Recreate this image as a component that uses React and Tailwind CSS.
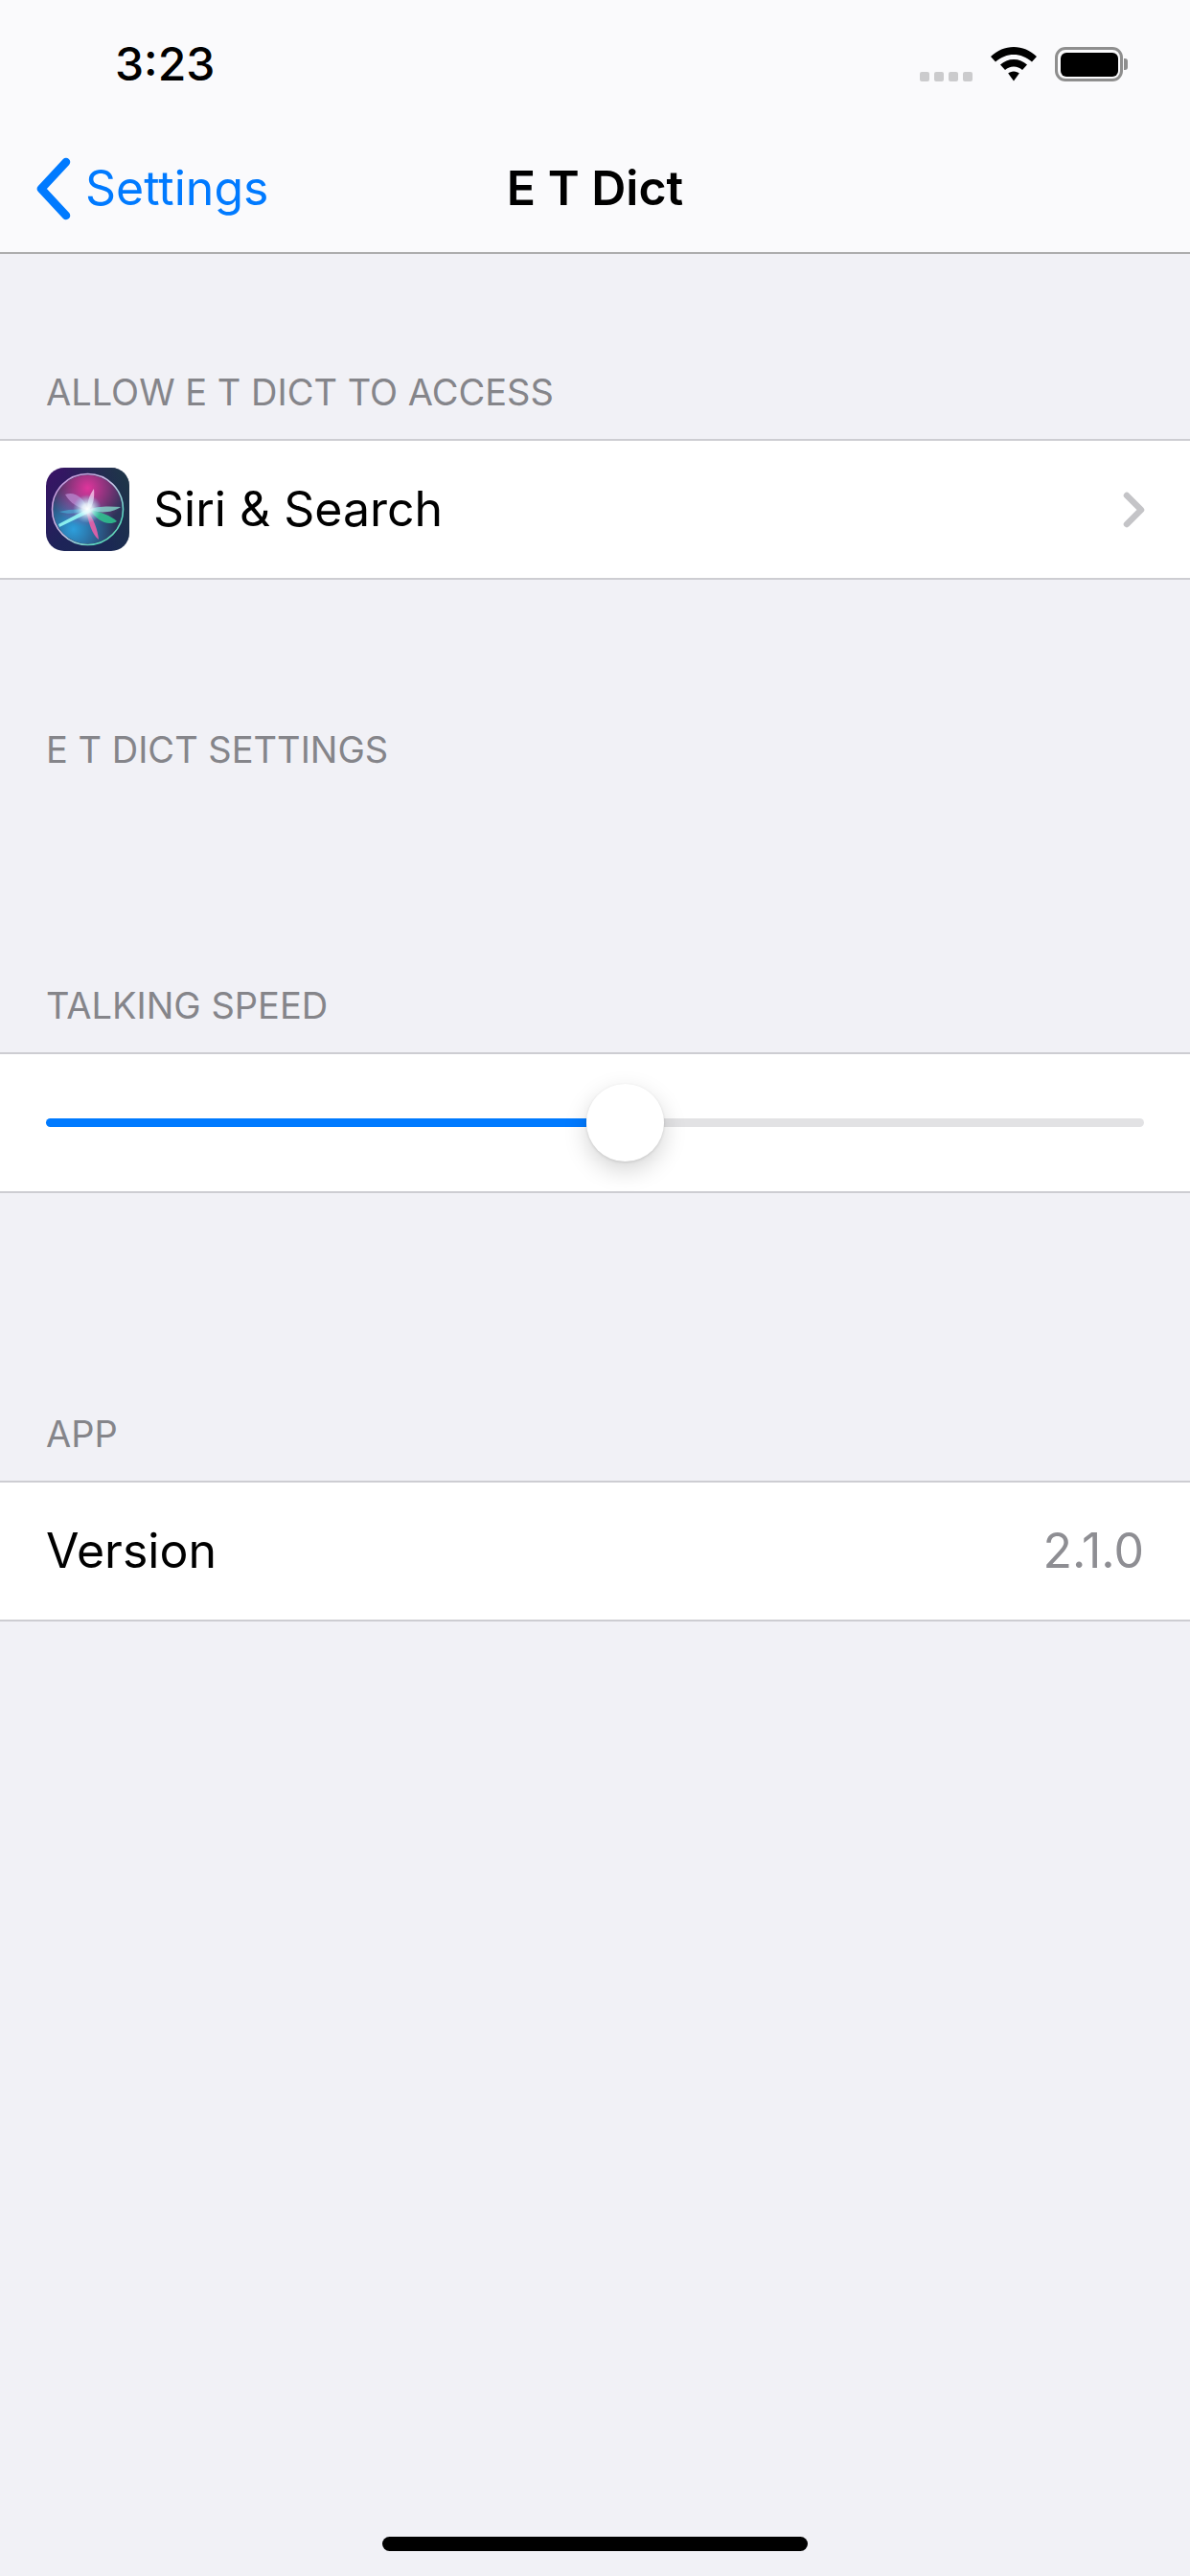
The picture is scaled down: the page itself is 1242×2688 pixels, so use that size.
const SiriIcon = () => (
  <svg width="87" height="87" viewBox="0 0 87 87" className="shrink-0">
    <defs>
      <linearGradient id="siriBg" x1="0" y1="0" x2="1" y2="1">
        <stop offset="0" stopColor="#3b1266" />
        <stop offset="0.55" stopColor="#1d2458" />
        <stop offset="1" stopColor="#1a2a52" />
      </linearGradient>
      <linearGradient id="siriBg2" x1="1" y1="0" x2="0" y2="0.6">
        <stop offset="0" stopColor="#1f3a44" stopOpacity="0.9" />
        <stop offset="0.6" stopColor="#1f3a44" stopOpacity="0" />
      </linearGradient>
      <linearGradient id="siriRing" x1="0" y1="0" x2="1" y2="1">
        <stop offset="0" stopColor="#c58ad8" />
        <stop offset="0.5" stopColor="#c9c3e6" />
        <stop offset="0.8" stopColor="#58d6c0" />
        <stop offset="1" stopColor="#7fd9a8" />
      </linearGradient>
      <radialGradient id="siriPink" cx="0.5" cy="0.2" r="0.55">
        <stop offset="0" stopColor="#e0359c" />
        <stop offset="1" stopColor="#e0359c" stopOpacity="0" />
      </radialGradient>
      <radialGradient id="siriBlue" cx="0.3" cy="0.78" r="0.6">
        <stop offset="0" stopColor="#2d9fdc" />
        <stop offset="1" stopColor="#2d9fdc" stopOpacity="0" />
      </radialGradient>
      <radialGradient id="siriCore" cx="0.5" cy="0.5" r="0.5">
        <stop offset="0" stopColor="#ffffff" />
        <stop offset="0.35" stopColor="#e8fbff" stopOpacity="0.85" />
        <stop offset="1" stopColor="#7fe9ff" stopOpacity="0" />
      </radialGradient>
      <clipPath id="siriClip">
        <circle cx="43.5" cy="43.5" r="36" />
      </clipPath>
      <filter id="siriSoft">
        <feGaussianBlur stdDeviation="0.7" />
      </filter>
    </defs>
    <rect width="87" height="87" rx="19" fill="url(#siriBg)" />
    <rect width="87" height="87" rx="19" fill="url(#siriBg2)" />
    <circle cx="43.5" cy="43.5" r="37" fill="#2a3358" />
    <g clipPath="url(#siriClip)">
      <circle cx="43.5" cy="43.5" r="37" fill="url(#siriBlue)" />
      <circle cx="43.5" cy="43.5" r="37" fill="url(#siriPink)" />
      <g filter="url(#siriSoft)">
        <path d="M20 28 C30 24 40 32 44 44 C34 42 26 38 20 28Z" fill="#b98ad0" opacity="0.75" />
        <path d="M50 22 C51 32 49 40 44 45 C42 38 45 29 50 22Z" fill="#f2c0e6" opacity="0.85" />
        <path d="M44 44 C52 40 66 40 78 41 C70 47 56 48 44 44Z" fill="#8cf0d8" opacity="0.7" />
        <path d="M46 44 C56 46 68 50 74 56 C64 62 52 54 46 44Z" fill="#2fc58f" opacity="0.85" />
        <path d="M42 44 C50 52 54 66 55 75 C48 70 44 56 42 44Z" fill="#e85fa8" opacity="0.9" />
        <path d="M45 42 L47 46 L14 62 L13 59Z" fill="#8ff3f0" opacity="0.95" />
        <path d="M14 46 C24 43 36 43 44 44 C34 48 22 49 14 46Z" fill="#3fc6e8" opacity="0.5" />
      </g>
      <circle cx="43" cy="43" r="15" fill="url(#siriCore)" />
    </g>
    <circle cx="43.5" cy="43.5" r="37" fill="none" stroke="url(#siriRing)" strokeWidth="1.6" />
  </svg>
);

const SectionHeader = ({ label, height }) => (
  <div className={`flex items-end px-12 pb-[26px] text-[38px] leading-[46px] text-[#85858a] ${height}`}>
    {label}
  </div>
);

const Row = ({ children }) => (
  <div className="flex h-[147px] items-center border-y-[2px] border-[#cdcdd2] bg-white px-12 text-[50px] text-black">
    {children}
  </div>
);

export default function App() {
  return (
    <div className="relative min-h-[2688px] bg-[#f1f1f6] font-['Inter','Liberation_Sans',sans-serif]">
      {/* nav bar */}
      <div className="h-[265px] border-b-[2px] border-[#adadad] bg-[#fafafc]">
        <div className="flex h-[132px] items-start justify-between pt-[38px] pl-[120px] pr-[65px]">
          <span className="text-[48px] font-medium leading-[58px] text-black">3:23</span>
          <div className="flex items-start gap-[19px] pt-[11px]">
            <div className="flex gap-[5px] pt-[26px]">
              <span className="h-[10px] w-[10px] rounded-[2px] bg-[#cbcbcd]" />
              <span className="h-[10px] w-[10px] rounded-[2px] bg-[#cbcbcd]" />
              <span className="h-[10px] w-[10px] rounded-[2px] bg-[#cbcbcd]" />
              <span className="h-[10px] w-[10px] rounded-[2px] bg-[#cbcbcd]" />
            </div>
            <svg width="48" height="36" viewBox="0 0 48 36">
              <path d="M24 0 C33 0 41 3.500 48 10 L43 15.500 C37 10.500 31 8 24 8 C17 8 11 10.500 5 15.500 L0 10 C7 3.500 15 0 24 0Z" fill="#000" />
              <path d="M24 13 C29.500 13 34 15 38 18.500 L33 24 C30.500 22 27.500 20.500 24 20.500 C20.500 20.500 17.500 22 15 24 L10 18.500 C14 15 18.500 13 24 13Z" fill="#000" />
              <path d="M24 25.500 C26.500 25.500 28.500 26.500 29.800 27.600 L24 35.500 L18.200 27.600 C19.500 26.500 21.500 25.500 24 25.500Z" fill="#000" />
            </svg>
            <div className="flex items-center gap-[1px]">
              <div className="flex h-[36px] w-[71px] items-center justify-center rounded-[11px] border-[3px] border-[#8e8e8e]">
                <div className="h-[25px] w-[60px] rounded-[6px] bg-black" />
              </div>
              <div className="h-[12px] w-[4px] rounded-r-[3px] bg-[#8e8e8e]" />
            </div>
          </div>
        </div>
        <div className="relative flex h-[131px] items-center pb-[2px]">
          <div className="flex items-center pl-[37px] text-[50px] text-[#007aff]">
            <svg width="39" height="66" viewBox="0 0 39 66" className="mr-[13px]">
              <path d="M32 5 L6 33 L32 61" fill="none" stroke="#007aff" strokeWidth="8.500" strokeLinecap="round" strokeLinejoin="round" />
            </svg>
            <span>Settings</span>
          </div>
          <div className="absolute inset-x-0 text-center text-[50px] font-semibold text-black">E T Dict</div>
        </div>
      </div>

      <SectionHeader label="ALLOW E T DICT TO ACCESS" height="h-[193px]" />
      <Row>
        <SiriIcon />
        <span className="ml-[25px] flex-1">Siri &amp; Search</span>
        <svg width="24" height="38" viewBox="0 0 24 38" className="mr-[-2px]">
          <path d="M4 4 L19 19 L4 34" fill="none" stroke="#c4c4c7" strokeWidth="6.500" strokeLinecap="round" strokeLinejoin="round" />
        </svg>
      </Row>

      <SectionHeader label="E T DICT SETTINGS" height="h-[226px]" />
      <SectionHeader label="TALKING SPEED" height="h-[267px]" />
      <Row>
        <div className="flex w-full items-center">
          <div className="h-[9px] w-[564px] rounded-l-full bg-[#007aff]" />
          <div className="z-10 h-[81px] w-[81px] shrink-0 rounded-full bg-white shadow-[0_9px_24px_rgba(0,0,0,0.17),0_1px_3px_rgba(0,0,0,0.12)]" />
          <div className="h-[9px] flex-1 rounded-r-full bg-[#e2e2e4]" />
        </div>
      </Row>

      <SectionHeader label="APP" height="h-[300px]" />
      <Row>
        <span className="flex-1">Version</span>
        <span className="text-[#8e8e93]">2.1.0</span>
      </Row>

      {/* home indicator */}
      <div className="absolute bottom-[26px] left-[399px] h-[15px] w-[444px] rounded-full bg-black" />
    </div>
  );
}
